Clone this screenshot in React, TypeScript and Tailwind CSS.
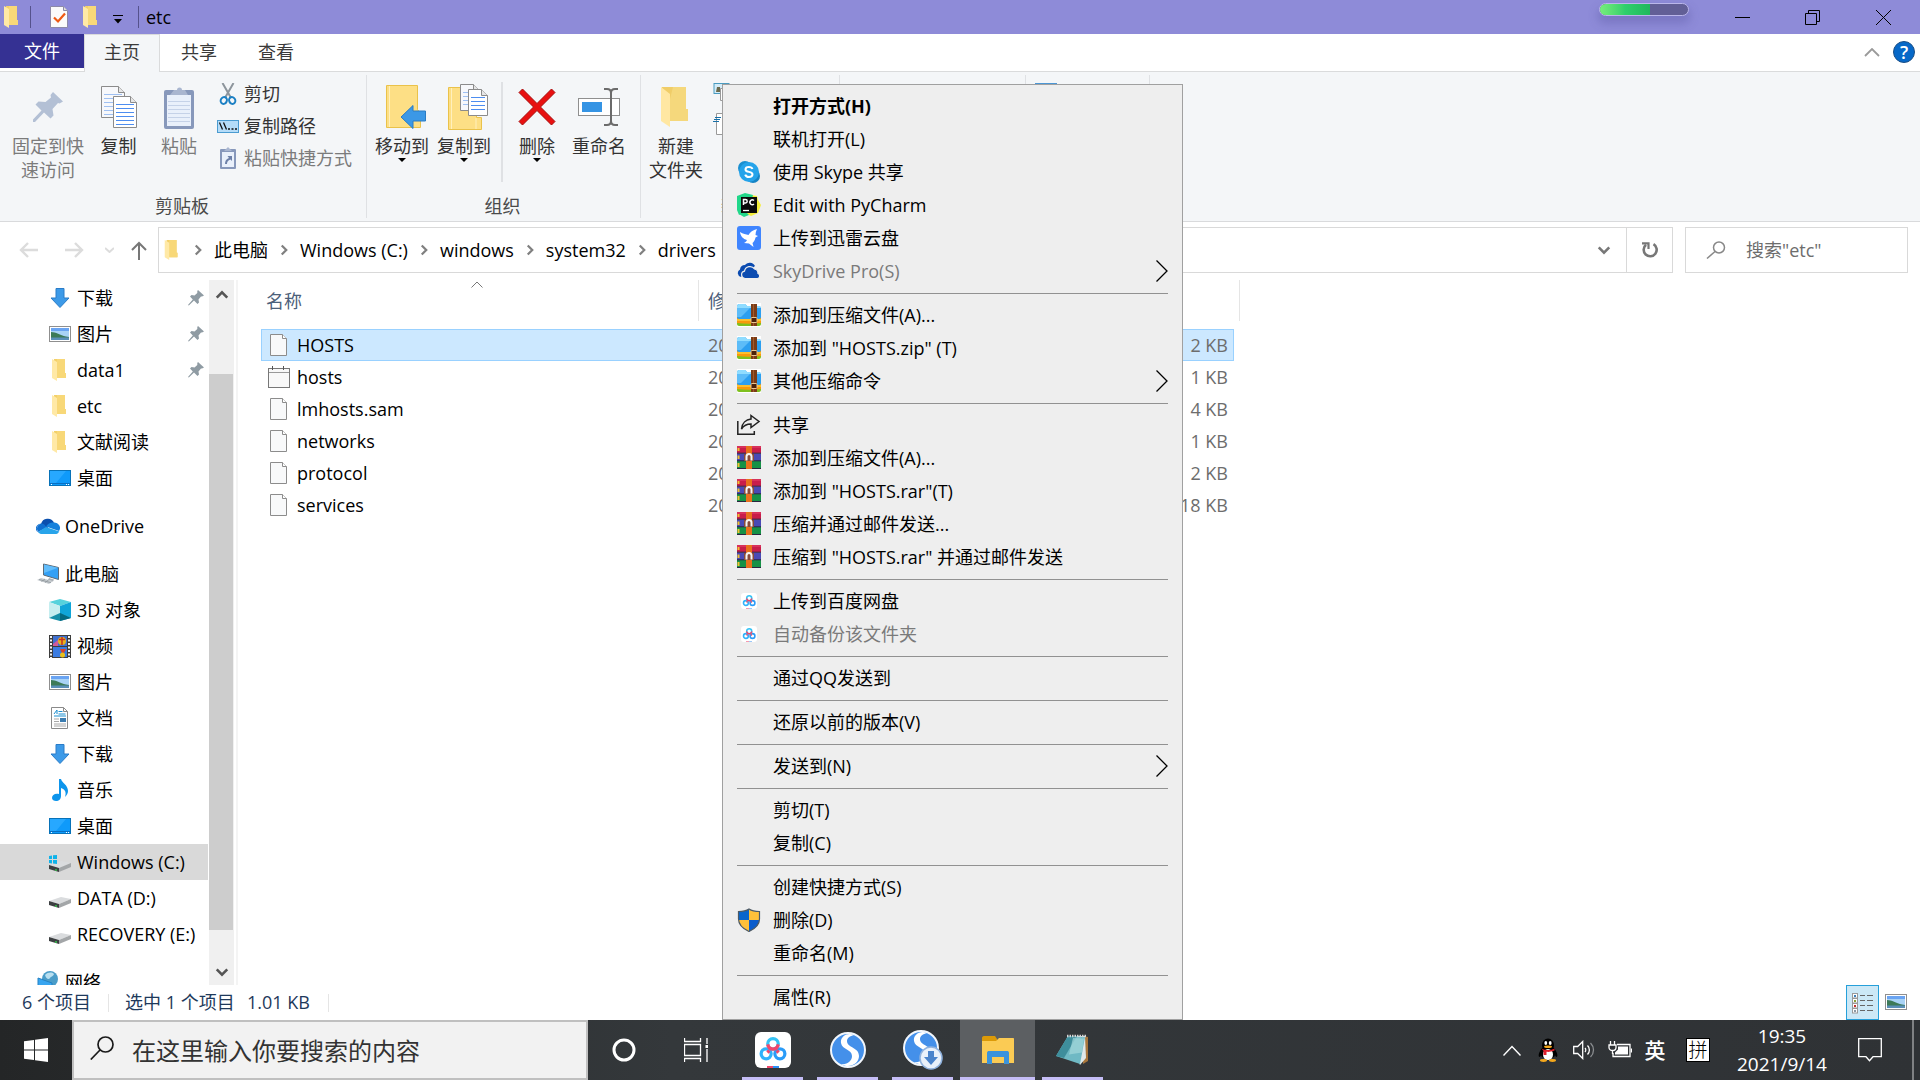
import React from "react";

type IconProps = { className?: string };

/* ---------- shared icons ---------- */

function Folder({ className = "w-[22px] h-[22px]" }: IconProps) {
  return (
    <svg viewBox="0 0 22 22" className={className} aria-hidden="true">
      <path d="M5 0h11v14h1v5H5z" fill="#f3d069" />
      <path d="M8 0h8v14h1v5H8z" fill="#f8d878" />
      <path d="M3 0l5 3v19l-5-3z" fill="#ffe9a6" />
    </svg>
  );
}

function DownArrow() {
  return (
    <svg viewBox="0 0 22 22" className="h-[22px] w-[22px]" aria-hidden="true">
      <path d="M7 1.500h8v9.500h5L11 20.500 2 11h5z" fill="#3c9ae8" stroke="#2a7cc8" strokeWidth="1" />
    </svg>
  );
}

function Picture() {
  return (
    <svg viewBox="0 0 22 16" className="h-4 w-[22px]" aria-hidden="true">
      <rect x=".5" y=".5" width="21" height="15" fill="#fff" stroke="#8f8f8f" />
      <rect x="2" y="2" width="18" height="12" fill="#a9d3f6" />
      <rect x="2" y="2" width="18" height="3" fill="#6aa4f2" />
      <path d="M2 6c5 0 9 3 15 4.500l3 .5v1H2z" fill="#3d7a58" />
      <path d="M2 11.500h18V14H2z" fill="#5a8fb8" />
    </svg>
  );
}

function Desktop() {
  return (
    <svg viewBox="0 0 22 16" className="h-4 w-[22px]" aria-hidden="true">
      <rect x=".5" y=".5" width="21" height="15" fill="#0f9afa" stroke="#0872b8" />
      <path d="M1 1h16L7 13H1z" fill="#27a8ff" />
      <path d="M1 13.500h20" stroke="#0a6fc0" />
      <path d="M2 14.500h1M17 14.500h1M19 14.500h1" stroke="#fff" />
    </svg>
  );
}

function OneDrive() {
  return (
    <svg viewBox="0 0 24 16" className="h-4 w-6" aria-hidden="true">
      <path d="M5 6a7 7 0 0 1 13-1.500L10 11z" fill="#0a4fae" />
      <path d="M5.500 5.500A5.300 5.300 0 0 0 2 14l9-4.500-3-3.200a6 6 0 0 0-2.500-.8z" fill="#0f6fd0" />
      <path d="M17.500 4.500a5.500 5.500 0 0 1 5.500 8.500L10 8.500c2-3 4.500-4.300 7.500-4z" fill="#1681dc" />
      <path d="M10 9l-8 5c1 1.400 2.300 2 4 2h13c2 0 3.500-1 4.300-2.600z" fill="#28a4ea" />
      <path d="M5.500 5.500A5.300 5.300 0 0 0 2 14l-1-.5a5 5 0 0 1 4.500-8z" fill="#0f6fd0" />
    </svg>
  );
}

function ThisPC() {
  return (
    <svg viewBox="0 0 24 22" className="h-[22px] w-6" aria-hidden="true">
      <path d="M7.500 1l15 3.500v12L7.500 12z" fill="#33a0f5" stroke="#5d6b77" />
      <path d="M8 1.500l14 3.200L8 10z" fill="#62bdfb" />
      <path d="M13 15l5 1.500-1 2-5-1.500z" fill="#a9b0b5" />
      <path d="M5 15l12 3-4 3L1 17z" fill="#c6cbcf" />
      <path d="M3 16.500l12 3.200M5.500 18.500L9 16M9 19.500l3.500-2.500" stroke="#8f979c" strokeWidth=".8" />
    </svg>
  );
}

function Cube() {
  return (
    <svg viewBox="0 0 22 22" className="h-[22px] w-[22px]" aria-hidden="true">
      <path d="M11 0l11 3-11 4L0 3z" fill="#56d2dc" />
      <path d="M0 3l11 4v8L0 19z" fill="#c5eef0" />
      <path d="M22 3L11 7v8l11 4z" fill="#10a5d8" />
      <path d="M11 14l11 5-11 3-11-3z" fill="#158fa8" />
      <path d="M11 14v8l11-3z" fill="#046a82" />
    </svg>
  );
}

function Film() {
  return (
    <svg viewBox="0 0 22 23" className="h-[23px] w-[22px]" aria-hidden="true">
      <rect width="22" height="23" fill="#3d3d3d" />
      <rect x="4" y="1" width="14" height="10" fill="#3f6fd0" />
      <rect x="4" y="12" width="14" height="10" fill="#3a7be0" />
      <circle cx="13" cy="6" r="4" fill="#e8b41c" />
      <path d="M13 2v8M10 4.500h6" stroke="#c8301e" strokeWidth="1.500" />
      <path d="M4 9l5-4v6H4z" fill="#d05a9a" />
      <path d="M11 14h6l-2 4h-2z" fill="#d8432a" />
      <circle cx="13.500" cy="20" r="2.500" fill="#e8c01c" />
      <path d="M2 1v22M20 1v22" stroke="#f4f4f4" strokeWidth="2" strokeDasharray="2 1.500" />
    </svg>
  );
}

function Document() {
  return (
    <svg viewBox="0 0 22 22" className="h-[22px] w-[22px]" aria-hidden="true">
      <path d="M2.500.5h12l4 4v17h-16z" fill="#fff" stroke="#8a8a8a" />
      <path d="M14.500.5v4h4" fill="none" stroke="#8a8a8a" />
      <path d="M5 7l3-4v4M9.500 4.500h4M9.500 7h7M5 9h12" stroke="#1d8fd0" fill="none" />
      <path d="M5 12h5M5 14.500h5M5 17h12M5 19h12" stroke="#a8a8a8" />
      <rect x="11" y="11" width="6" height="4" fill="#3b7cb0" />
    </svg>
  );
}

function Music() {
  return (
    <svg viewBox="0 0 22 22" className="h-[22px] w-[22px]" aria-hidden="true">
      <path d="M10 0h2c1 4 7 6 7 12 0 2-1 4-3 6 2-6-1-8-4-9v8c0 3-2 5-5 5-2 0-4-1-4-3 0-3 3-5 7-4z" fill="#0d95ec" />
    </svg>
  );
}

function Drive({ windows = false }: { windows?: boolean }) {
  return (
    <svg viewBox="0 0 22 22" className="h-[22px] w-[22px]" aria-hidden="true">
      <path d="M0 14l12-4 10 2-12 5z" fill="#dadcde" />
      <path d="M0 14l10 3v4L0 18z" fill="#3c3f41" />
      <path d="M10 17l12-5v4l-12 5z" fill="#a3a6a8" />
      <path d="M7 18v2" stroke="#36c24a" strokeWidth="1.500" />
      {windows && <path d="M0 5l3-.5V8H0zM4 4.300L8 4v4H4zM0 9h3v3.500L0 12zM4 9h4v4l-4-.4z" fill="#0fb3ea" />}
    </svg>
  );
}

function Network() {
  return (
    <svg viewBox="0 0 24 24" className="h-6 w-6" aria-hidden="true">
      <circle cx="14" cy="9" r="8" fill="#4a9cc8" />
      <path d="M9 5c3-3 7-3 9-1-1 3-3 2-4 4s-4 1-5-3z" fill="#b8dff0" />
      <path d="M2 8l14 5v10L2 19z" fill="#38a5f0" stroke="#2482c4" />
    </svg>
  );
}

function NavPin() {
  return (
    <svg viewBox="0 0 16 16" className="h-4 w-4" aria-hidden="true">
      <path d="M10 0l6 5.500-2 1-1 0-2.500 3 .5 3-1.500 1.500L6 10.500.800 15.500 0 15l4.800-5.500L2 6.500 3.500 5l3 .5L9.300 3V1z" fill="#8f9ba3" />
    </svg>
  );
}

function Chevron({ dir, className = "h-4 w-4" }: { dir: "left" | "right" | "up" | "down"; className?: string }) {
  const d = {
    right: "M5 2l6 6-6 6",
    left: "M11 2L5 8l6 6",
    up: "M2 11l6-6 6 6",
    down: "M2 5l6 6 6-6",
  }[dir];
  return (
    <svg viewBox="0 0 16 16" className={className} fill="none" stroke="currentColor" strokeWidth="3" aria-hidden="true">
      <path d={d} />
    </svg>
  );
}

/* ---------- title bar ---------- */

function TitleBar() {
  return (
    <header className="flex h-[34px] shrink-0 items-center bg-[#8e8bd8] text-black">
      <Folder className="ml-px h-[22px] w-[22px]" />
      <span className="ml-[7px] h-[22px] w-px bg-[#55528c]" />
      <button aria-label="属性" className="ml-[19px]">
        <svg viewBox="0 0 18 22" className="h-[22px] w-[18px]">
          <path d="M.5.5h13l4 4v17H.5z" fill="#fbfbfb" stroke="#8d8aa8" />
          <path d="M13.500.5v4h4" fill="#ddd" stroke="#8d8aa8" />
          <path d="M4 11.500l4 4 7-8" fill="none" stroke="#ee5a14" strokeWidth="2.200" />
        </svg>
      </button>
      <button aria-label="新建文件夹" className="ml-3">
        <Folder />
      </button>
      <button aria-label="自定义快速访问工具栏" className="ml-[11px]">
        <svg viewBox="0 0 10 9" className="mt-1 h-[9px] w-[10px]">
          <path d="M0 .5h10" stroke="#000" />
          <path d="M1 4h8L5 8.500z" fill="#000" />
        </svg>
      </button>
      <span className="ml-[15px] h-[22px] w-px bg-[#55528c]" />
      <span className="ml-[7px] leading-6">etc</span>
      <span className="mb-4 ml-auto h-[13px] w-[90px] overflow-hidden rounded-full border border-[#bab6ea] bg-[#625f96] shadow-[0_6px_8px_2px_rgba(90,85,160,0.35)]">
        <span className="block h-full w-[50px] bg-linear-to-r from-[#75ee7c] via-[#2fcf6c] to-[#20b85c]" />
      </span>
      <button aria-label="最小化" className="ml-[18px] flex h-full w-[70px] items-center justify-center">
        <svg viewBox="0 0 15 15" className="h-[15px] w-[15px]"><path d="M0 7.500h15" stroke="#000" /></svg>
      </button>
      <button aria-label="向下还原" className="flex h-full w-[70px] items-center justify-center">
        <svg viewBox="0 0 15 15" className="h-[15px] w-[15px]" fill="none" stroke="#000">
          <path d="M.5 3.500h11v11H.5zM3.500 3.500v-3h11v11h-3" />
        </svg>
      </button>
      <button aria-label="关闭" className="flex h-full w-[73px] items-center justify-center">
        <svg viewBox="0 0 15 15" className="h-[15px] w-[15px]" stroke="#000"><path d="M0 0l15 15M15 0L0 15" /></svg>
      </button>
    </header>
  );
}

/* ---------- ribbon ---------- */

function RibbonTabs() {
  return (
    <div className="flex h-[38px] shrink-0 border-b border-[#dadbdc] bg-white text-[#3a3a3a]">
      <button className="h-[34px] w-[84px] bg-[#353193] text-white">文件</button>
      <button className="-mb-px h-[38px] w-[76px] border-x border-t border-[#dadbdc] bg-[#f4f6f8] pb-[3px]">主页</button>
      <button className="h-[37px] w-[78px] pb-[2px]">共享</button>
      <button className="h-[37px] w-[76px] pb-[2px]">查看</button>
      <button aria-label="最小化功能区" className="mr-[13px] ml-auto text-[#9a9a9a]">
        <svg viewBox="0 0 16 9" className="h-[9px] w-4" fill="none" stroke="currentColor" strokeWidth="1.800"><path d="M1 8l7-7 7 7" /></svg>
      </button>
      <button aria-label="帮助" className="mt-[7px] mr-[5px] flex h-[22px] w-[22px] items-center justify-center rounded-full border border-[#1b4f86] bg-[#0668c8] leading-5 font-semibold text-white">
        ?
      </button>
    </div>
  );
}

function BigButton({ icon, lines, width, disabled, arrow }: { icon: React.ReactNode; lines: string[]; width: string; disabled?: boolean; arrow?: boolean }) {
  return (
    <button disabled={disabled} className={`flex shrink-0 flex-col items-center ${width} ${disabled ? "text-[#7b7b7b]" : "text-[#333]"}`}>
      <span className="flex h-[54px] items-center justify-center">{icon}</span>
      {lines.map((l) => (
        <span key={l} className="leading-6 whitespace-nowrap">{l}</span>
      ))}
      {arrow && <svg viewBox="0 0 8 4" className="h-1 w-2"><path d="M0 0h8L4 4z" fill="#000" /></svg>}
    </button>
  );
}

function RibbonGroup({ label, width, children }: { label: string; width: string; children?: React.ReactNode }) {
  return (
    <section className={`my-[3px] flex shrink-0 flex-col border-r border-[#dfe1e4] pt-[5px] ${width}`}>
      <div className="flex flex-1">{children}</div>
      <p className="pr-[2px] text-center leading-6 text-[#4a4a4a]">{label}</p>
    </section>
  );
}

function PinIcon() {
  return (
    <svg viewBox="0 0 30 30" className="h-[30px] w-[30px]" aria-hidden="true">
      <path d="M20 0l10 9.500-3.500 2-1.500-.5-5.500 6 1 6.500-3 3L11 20.500 2 30H0v-2.500l8.500-9L2.500 12.500l3-3 7 .5L18 5.500 17.500 3z" fill="#b3c0d5" />
    </svg>
  );
}

function Sheet({ x, y, w, h, soft }: { x: number; y: number; w: number; h: number; soft?: boolean }) {
  const ys: number[] = [];
  for (let i = y + 8; i < y + h - 3; i += 4) ys.push(i);
  return (
    <g>
      <path d={`M${x + 0.5} ${y + 0.5}h${w - 7}l6 6v${h - 7}h-${w - 1}z`} fill={soft ? "#f7f8fb" : "#fff"} stroke="#8b8b8b" />
      <path d={`M${x + w - 6.5} ${y + 0.5}v6h6`} fill="#e6e6e6" stroke="#8b8b8b" />
      {ys.map((v) => (
        <path key={v} d={`M${x + 3} ${v + 0.5}h${w - 6}`} stroke={soft ? "#9fc0f2" : "#4d8df0"} />
      ))}
    </g>
  );
}

function CopyIcon() {
  return (
    <svg viewBox="0 0 36 42" className="h-[42px] w-9" aria-hidden="true">
      <Sheet x={0} y={0} w={24} h={32} soft />
      <Sheet x={12} y={10} w={24} h={32} />
    </svg>
  );
}

function PasteIcon({ className = "h-[43px] w-[30px]" }: IconProps) {
  return (
    <svg viewBox="0 0 30 43" className={className} aria-hidden="true">
      <rect x="0" y="4" width="30" height="39" rx="2" fill="#8798bb" />
      <rect x="3" y="9" width="24" height="31" fill="#e9f0fb" />
      <path d="M4 15.500h22M4 19.500h22M4 23.500h22M4 27.500h22M4 31.500h22M4 35.500h22" stroke="#c5d2e8" />
      <path d="M6 9l4-5h3a2.500 2.500 0 0 1 5 0h3l3 5z" fill="#a9b6d0" />
    </svg>
  );
}

function MoveToIcon() {
  return (
    <svg viewBox="-8 0 48 44" className="h-11 w-12" aria-hidden="true">
      <path d="M.5.500h31v24l3 4v14H.5z" fill="#fddf85" stroke="#eac24a" />
      <path d="M3.500 1v41" stroke="#fff0bd" />
      <path d="M15 32l12-11.500V26h12.500v10H27v7.500z" fill="#3b98e6" stroke="#2a7cc4" />
    </svg>
  );
}

function CopyToIcon() {
  return (
    <svg viewBox="-8 0 48 46" className="h-[46px] w-12" aria-hidden="true">
      <path d="M.5 3.500h28v30h5v12H.5z" fill="#fddf85" stroke="#eac24a" />
      <path d="M3.500 4v41M28 34v11" stroke="#fff0bd" />
      <Sheet x={12} y={0} w={20} h={27} soft />
      <Sheet x={20} y={5} w={20} h={27} />
    </svg>
  );
}

function DeleteIcon() {
  return (
    <svg viewBox="0 0 38 38" className="h-[38px] w-[38px]" aria-hidden="true">
      <path d="M1 4.500l3.500-3.500L19 15.500 33.500 1 37 4.500 22.500 19 37 33.500 33.500 37 19 22.500 4.500 37 1 33.500 15.500 19z" fill="#e81010" stroke="#a80c0c" strokeWidth="1" />
    </svg>
  );
}

function RenameIcon() {
  return (
    <svg viewBox="0 0 42 38" className="h-[38px] w-[42px]" aria-hidden="true">
      <rect x=".5" y="10.500" width="41" height="17" fill="#fff" stroke="#8f8f8f" />
      <rect x="4" y="14" width="20" height="10" fill="#3594e4" />
      <path d="M26 1h3c3 0 4 2 4 4v28c0 2-1 4-4 4h-3M40 1h-3c-3 0-4 2-4 4M40 37h-3c-3 0-4-2-4-4" fill="none" stroke="#6b6b6b" strokeWidth="2" />
    </svg>
  );
}

function NewFolderIcon() {
  return (
    <svg viewBox="0 0 30 40" className="h-10 w-[30px]" aria-hidden="true">
      <path d="M1 0h24v22h2v12H1z" fill="#f0cd68" />
      <path d="M12 0h13v22h2v12H9V12z" fill="#f5d87c" />
      <path d="M0 0l9 7v33l-9-6z" fill="#ffe7a2" />
    </svg>
  );
}

function ScissorsIcon() {
  return (
    <svg viewBox="0 0 22 22" className="h-[22px] w-[22px]" fill="none" aria-hidden="true">
      <path d="M5.500 0l8 14M16.500 0l-8 14" stroke="#8d959c" strokeWidth="2" />
      <ellipse cx="7" cy="17.500" rx="3" ry="3.500" transform="rotate(25 7 17)" stroke="#1c80c4" strokeWidth="2" />
      <ellipse cx="15" cy="17.500" rx="3" ry="3.500" transform="rotate(-25 15 17)" stroke="#1c80c4" strokeWidth="2" />
    </svg>
  );
}

function PathIcon() {
  return (
    <svg viewBox="0 0 22 13" className="h-[13px] w-[22px]" aria-hidden="true">
      <rect x=".5" y=".5" width="21" height="12" fill="#b5dcf8" stroke="#4a9bd0" />
      <path d="M2.500 2.500l3 7M6.500 2.500l3 7" stroke="#111" strokeWidth="1.300" />
      <path d="M11 9h2M14.500 9h2M18 9h2" stroke="#111" strokeWidth="1.500" />
    </svg>
  );
}

function ShortcutIcon() {
  return (
    <svg viewBox="0 0 22 22" className="h-[22px] w-[22px]" aria-hidden="true">
      <rect x="3" y="2" width="16" height="20" rx="1" fill="#8798bb" />
      <rect x="5" y="5" width="12" height="15" fill="#e9f0fb" />
      <path d="M7 4l2-2 2-2 2 2 2 2z" fill="#a9b6d0" />
      <path d="M8 17c0-3 1-5 4-6l-1.500-2H15v5l-1.500-1.500C11 13 10 15 10 17z" fill="#6d80a8" />
    </svg>
  );
}

function SmallButton({ icon, label, disabled }: { icon: React.ReactNode; label: string; disabled?: boolean }) {
  return (
    <button disabled={disabled} className={`flex h-8 items-center gap-[5px] whitespace-nowrap ${disabled ? "text-[#7b7b7b]" : "text-[#333]"}`}>
      {icon}
      {label}
    </button>
  );
}

function Ribbon() {
  return (
    <div className="flex h-[150px] shrink-0 border-b border-[#d9dadc] bg-[#f4f6f8]">
      <RibbonGroup label="剪贴板" width="w-[367px]">
        <BigButton disabled width="w-24" icon={<PinIcon />} lines={["固定到快", "速访问"]} />
        <BigButton width="w-[45px]" icon={<CopyIcon />} lines={["复制"]} />
        <BigButton disabled width="w-[76px]" icon={<PasteIcon />} lines={["粘贴"]} />
        <div className="-mt-[2px] flex flex-col">
          <SmallButton icon={<ScissorsIcon />} label="剪切" />
          <SmallButton icon={<PathIcon />} label="复制路径" />
          <SmallButton disabled icon={<ShortcutIcon />} label="粘贴快捷方式" />
        </div>
      </RibbonGroup>
      <RibbonGroup label="组织" width="w-[274px]">
        <BigButton arrow width="w-[70px]" icon={<MoveToIcon />} lines={["移动到"]} />
        <BigButton arrow width="w-[54px]" icon={<CopyToIcon />} lines={["复制到"]} />
        <span className="mt-[2px] ml-[10px] h-[100px] w-[2px] bg-[#dfe1e4]" />
        <BigButton arrow width="w-[68px]" icon={<DeleteIcon />} lines={["删除"]} />
        <BigButton width="w-[56px]" icon={<RenameIcon />} lines={["重命名"]} />
      </RibbonGroup>
      <RibbonGroup label="新建" width="w-[199px]">
        <BigButton width="w-[70px]" icon={<NewFolderIcon />} lines={["新建", "文件夹"]} />
        <div className="flex flex-col gap-2">
          <svg viewBox="0 0 22 22" className="mt-[3px] ml-[2px] h-[22px] w-[22px]" aria-hidden="true">
            <rect x="1" y=".5" width="15" height="10" fill="#d4ecf8" stroke="#4a9bc0" />
            <path d="M4 4h3v5H3z" fill="#6b6a4e" />
            <path d="M7.500 5.500h12v12h-12z" fill="#fff" stroke="#999" />
          </svg>
          <svg viewBox="0 0 22 22" className="ml-[2px] h-[22px] w-[22px]" aria-hidden="true">
            <path d="M3.500.500h16v21h-16z" fill="#fff" stroke="#999" />
            <path d="M2 4.500h6M1 6.500h6M0 8.500h6" stroke="#1870a8" />
          </svg>
        </div>
      </RibbonGroup>
      <RibbonGroup label="打开" width="w-[186px]" />
      <RibbonGroup label="选择" width="w-[124px]">
        <span className="mt-[3px] ml-[9px] h-2 w-[22px] bg-[#4c96d4]" />
      </RibbonGroup>
    </div>
  );
}

/* ---------- address bar ---------- */

function AddressRow() {
  const crumbs = ["此电脑", "Windows (C:)", "windows", "system32", "drivers"];
  return (
    <div className="flex h-[58px] shrink-0 items-center bg-white pt-[5px] pr-3 pb-[7px]">
      <div className="flex w-[158px] shrink-0 items-center pl-[19px]">
        <button aria-label="后退" className="w-[46px] text-[#dcdcdc]">
          <svg viewBox="0 0 19 16" className="h-4 w-[19px]" fill="none" stroke="currentColor" strokeWidth="2.400"><path d="M19 8H2M9 1L2 8l7 7" /></svg>
        </button>
        <button aria-label="前进" className="w-10 text-[#dcdcdc]">
          <svg viewBox="0 0 19 16" className="h-4 w-[19px]" fill="none" stroke="currentColor" strokeWidth="2.400"><path d="M0 8h17M10 1l7 7-7 7" /></svg>
        </button>
        <button aria-label="最近浏览的位置" className="w-[26px] text-[#dcdcdc]">
          <svg viewBox="0 0 9 6" className="h-[6px] w-[9px]" fill="none" stroke="currentColor" strokeWidth="2"><path d="M0 1l4.500 4L9 1" /></svg>
        </button>
        <button aria-label="上移" className="text-[#777]">
          <svg viewBox="0 0 16 19" className="h-[19px] w-4" fill="none" stroke="currentColor" strokeWidth="2"><path d="M8 19V2M1 9l7-7 7 7" /></svg>
        </button>
      </div>
      <nav aria-label="地址" className="flex h-[46px] min-w-0 flex-1 items-center border border-[#d9d9d9] pl-[3px]">
        <Folder className="h-[22px] w-5" />
        {crumbs.map((c) => (
          <React.Fragment key={c}>
            <Chevron dir="right" className="mx-[10px] h-3 w-3 text-[#808080]" />
            <a href="#" className="whitespace-nowrap text-black">{c}</a>
          </React.Fragment>
        ))}
        <button aria-label="以前的位置" className="mr-[15px] ml-auto text-[#777]">
          <Chevron dir="down" className="h-[14px] w-[14px]" />
        </button>
        <button aria-label="刷新" className="flex h-full w-[46px] items-center justify-center border-l border-[#d9d9d9] text-[#777]">
          <svg viewBox="0 0 18 18" className="h-[18px] w-[18px]" fill="none" stroke="currentColor" strokeWidth="2.600">
            <path d="M12.500 3.200A6.500 6.500 0 1 1 5 3.800" />
            <path d="M1 2.300h6.500V8" strokeWidth="2.200" />
          </svg>
        </button>
      </nav>
      <label className="ml-3 flex h-[46px] w-[223px] items-center border border-[#d9d9d9] pl-5">
        <svg viewBox="0 0 20 18" className="h-[18px] w-5 shrink-0" fill="none" stroke="#888" strokeWidth="1.500">
          <circle cx="13" cy="6.500" r="5.500" />
          <path d="M9 10.500L1 17.500" />
        </svg>
        <input aria-label="搜索" placeholder='搜索"etc"' className="ml-5 w-full min-w-0 bg-transparent outline-none placeholder:text-[#6d6d6d]" />
      </label>
    </div>
  );
}

/* ---------- navigation pane ---------- */

type NavItem = { icon: React.ReactNode; label: string; pinned?: boolean; root?: boolean; selected?: boolean };

const navItems: NavItem[] = [
  { icon: <DownArrow />, label: "下载", pinned: true },
  { icon: <Picture />, label: "图片", pinned: true },
  { icon: <Folder />, label: "data1", pinned: true },
  { icon: <Folder />, label: "etc" },
  { icon: <Folder />, label: "文献阅读" },
  { icon: <Desktop />, label: "桌面" },
  { icon: <OneDrive />, label: "OneDrive", root: true },
  { icon: <ThisPC />, label: "此电脑", root: true },
  { icon: <Cube />, label: "3D 对象" },
  { icon: <Film />, label: "视频" },
  { icon: <Picture />, label: "图片" },
  { icon: <Document />, label: "文档" },
  { icon: <DownArrow />, label: "下载" },
  { icon: <Music />, label: "音乐" },
  { icon: <Desktop />, label: "桌面" },
  { icon: <Drive windows />, label: "Windows (C:)", selected: true },
  { icon: <Drive />, label: "DATA (D:)" },
  { icon: <Drive />, label: "RECOVERY (E:)" },
  { icon: <Network />, label: "网络", root: true },
];

function NavPane() {
  return (
    <aside className="flex w-[238px] shrink-0 border-r-2 border-[#f4f4f4]">
      <ul className="h-0 min-h-full w-[208px] overflow-hidden">
        {navItems.map((n, i) => (
          <li key={i} className={n.root ? "mt-3" : ""}>
            <a href="#" className={`flex h-9 items-center text-black ${n.root ? "pl-9" : "pl-12"} ${n.selected ? "bg-[#d9d9d9]" : ""}`}>
              <span className="mr-[5px] flex w-6 shrink-0 justify-center">{n.icon}</span>
              <span className="whitespace-nowrap">{n.label}</span>
              {n.pinned && <span className="mr-1 ml-auto"><NavPin /></span>}
            </a>
          </li>
        ))}
      </ul>
      <div className="ml-px flex w-[25px] flex-col items-center bg-[#f0f0f0] text-[#555]">
        <button aria-label="向上滚动" className="flex h-[30px] items-center"><Chevron dir="up" className="h-[14px] w-[14px]" /></button>
        <div className="mt-16 mr-px w-6 flex-1 bg-[#cdcdcd]" />
        <button aria-label="向下滚动" className="mt-[29px] flex h-[26px] items-center"><Chevron dir="down" className="h-[14px] w-[14px]" /></button>
      </div>
    </aside>
  );
}

/* ---------- file list ---------- */

const files = [
  { name: "HOSTS", size: "2 KB", selected: true },
  { name: "hosts", size: "1 KB", calendar: true },
  { name: "lmhosts.sam", size: "4 KB" },
  { name: "networks", size: "1 KB" },
  { name: "protocol", size: "2 KB" },
  { name: "services", size: "18 KB" },
];

function FileIcon() {
  return (
    <svg viewBox="0 0 22 22" className="h-[22px] w-[22px]" aria-hidden="true">
      <path d="M2.500.5h12l4 4v17h-16z" fill="#f8f9fa" stroke="#8c8c8c" />
      <path d="M14.500.5v4h4" fill="#fff" stroke="#8c8c8c" />
    </svg>
  );
}

function CalendarIcon() {
  return (
    <svg viewBox="0 0 22 22" className="h-[22px] w-[22px]" aria-hidden="true">
      <rect x=".5" y="2.500" width="21" height="19" fill="#f8f8f8" stroke="#777" />
      <path d="M1 6.500h20" stroke="#999" />
      <path d="M4.500 0v4M15.500 0v4" stroke="#555" />
    </svg>
  );
}

function FileList() {
  return (
    <main className="min-w-0 flex-1 overflow-hidden pl-[23px]">
      <table className="w-[979px] table-fixed border-separate border-spacing-0">
        <thead>
          <tr className="text-left text-[#4c607a]">
            <th className="w-[438px] p-0 font-normal">
              <div className="relative mb-2 flex h-[41px] items-center border-r border-[#e5e5e5] pl-[5px]">
                名称
                <svg viewBox="0 0 12 7" className="absolute top-px left-[210px] h-[7px] w-3" fill="none" stroke="#777" aria-hidden="true"><path d="M.5 6.500L6 1l5.500 5.500" /></svg>
              </div>
            </th>
            <th className="p-0 font-normal"><div className="mb-2 flex h-[41px] items-center pl-[9px]">修改日期</div></th>
            <th className="w-[120px] p-0"><div className="mb-2 h-[41px]" /></th>
            <th className="w-[6px] p-0"><div className="mb-2 h-[41px] border-r border-[#e5e5e5]" /></th>
          </tr>
        </thead>
        <tbody>
          {files.map((f) => (
            <tr key={f.name} className="text-[#6d6d6d]">
              <td className={`h-8 p-0 text-black ${f.selected ? "border-y border-l border-[#99d1ff] bg-[#cce8ff]" : "border-y border-l border-transparent"}`}>
                <span className="flex items-center gap-[7px] pl-[6px]">
                  {f.calendar ? <CalendarIcon /> : <FileIcon />}
                  {f.name}
                </span>
              </td>
              <td className={`h-8 border-y p-0 pl-[9px] ${f.selected ? "border-[#99d1ff] bg-[#cce8ff]" : "border-transparent"}`}>20</td>
              <td className={`h-8 border-y border-r p-0 pr-[5px] text-right ${f.selected ? "border-[#99d1ff] bg-[#cce8ff]" : "border-transparent"}`}>{f.size}</td>
              <td className="p-0" />
            </tr>
          ))}
        </tbody>
      </table>
    </main>
  );
}

/* ---------- status bar ---------- */

function StatusBar() {
  return (
    <footer className="flex h-[35px] shrink-0 items-center bg-white pr-[13px] text-[#1e395b]">
      <span className="ml-[22px] w-[86px] pb-[2px] whitespace-nowrap">6 个项目</span>
      <span className="h-[18px] w-px bg-[#e5e5e5]" />
      <span className="ml-4 w-[122px] pb-[2px] whitespace-nowrap">选中 1 个项目</span>
      <span className="w-[81px] pb-[2px] whitespace-nowrap">1.01 KB</span>
      <span className="h-[18px] w-px bg-[#e5e5e5]" />
      <button aria-label="详细信息" className="ml-auto flex h-[35px] w-[33px] items-center justify-center border border-[#26a0da] bg-[#cce8f6]">
        <svg viewBox="0 0 22 22" className="h-[22px] w-[22px]">
          {[1, 6, 11, 16].map((y, i) => (
            <g key={y}>
              <rect x=".5" y={y + 0.5} width="5" height="4.500" fill="#fff" stroke="#999" />
              <rect x="2" y={y + 2} width="2" height="2" fill={["#3b7fb8", "#8aa03a", "#c03030", "#8a9aa5"][i]} />
              <path d={`M8 ${y + 2.5}h5M15 ${y + 2.5}h6`} stroke="#666" />
            </g>
          ))}
        </svg>
      </button>
      <button aria-label="大图标" className="mb-[2px] ml-[6px]"><Picture /></button>
    </footer>
  );
}

/* ---------- context menu icons ---------- */

function SkypeIcon() {
  return (
    <svg viewBox="0 0 24 24" className="h-6 w-6" aria-hidden="true">
      <circle cx="8" cy="8" r="7" fill="#1a8fd0" />
      <circle cx="16" cy="16" r="7" fill="#1583c4" />
      <circle cx="12" cy="12" r="10" fill="#25a3ea" />
      <path d="M15.500 9c-.6-1.500-2-2-3.600-2-2 0-3.400.9-3.400 2.400 0 3.400 7 1.600 7 4.900 0 1.700-1.500 2.700-3.500 2.700-2 0-3.300-.8-3.800-2.400" fill="none" stroke="#fff" strokeWidth="2" />
    </svg>
  );
}

function PyCharmIcon() {
  return (
    <svg viewBox="0 0 24 24" className="h-6 w-6" aria-hidden="true">
      <path d="M14 2l6 1 1 4 3 5-3 8-7 3-6-3z" fill="#f5ee3c" />
      <path d="M0 3l8-3 8 2-4 14-10 6-2-5z" fill="#21d789" />
      <path d="M2 21l6-3 4 4-5 2z" fill="#21d789" />
      <rect x="4" y="4" width="16" height="16" fill="#0b0b0b" />
      <path d="M6.500 12V6.500h2a1.700 1.700 0 0 1 0 3.400H7M17 7.500a2.400 2.400 0 1 0 0 3.500" fill="none" stroke="#fff" strokeWidth="1.500" />
      <path d="M6 17.500h6" stroke="#fff" strokeWidth="1.300" />
    </svg>
  );
}

function ThunderIcon() {
  return (
    <svg viewBox="0 0 24 24" className="h-6 w-6" aria-hidden="true">
      <rect width="24" height="24" rx="3" fill="#3f85ff" />
      <path d="M3 6c3 2 6 2.500 8.500 3C13 6 16 4 20 3c-1 2-1.500 4-1.500 6l2.500 1-2.500 1.500c-.5 3-2 4.500-3 5.500l1 4-4.500-3.500-5-.5c2-1 2.500-2 3-3C6 13 3.500 10 3 6z" fill="#fff" />
    </svg>
  );
}

function SkyDriveIcon() {
  return (
    <svg viewBox="0 0 24 24" className="h-6 w-6" aria-hidden="true">
      <path d="M4 18a4 4 0 0 1-1-7.500A5 5 0 0 1 8 6a6 6 0 0 1 10 1" fill="#0b4bb0" />
      <path d="M8 19.500a3.700 3.700 0 0 1-.5-7.300A5.500 5.500 0 0 1 17.500 10a4.500 4.500 0 0 1 3.500 4.500 2.600 2.600 0 0 1-.5 5z" fill="#0b4bb0" stroke="#eee" strokeWidth="1.200" />
    </svg>
  );
}

function ZipIcon() {
  return (
    <svg viewBox="0 0 24 24" className="h-6 w-6" aria-hidden="true">
      <rect width="24" height="24" fill="#fff" />
      <path d="M0 17h24v4c0 1-1 2-2 2H2c-1 0-2-1-2-2z" fill="#7fc01f" />
      <path d="M0 14h24v6c-8 1-16 1-24 0z" fill="#f79a0c" />
      <path d="M0 16h24v2H0z" fill="#fdbf2d" />
      <path d="M2 1h6l2 2h12c1 0 2 1 2 2v9c0 1-1 2-2 2H2c-1 0-2-1-2-2V3c0-1 1-2 2-2z" fill="#2c9ff0" />
      <path d="M2 1h6l2 2h12c1 0 2 1 2 2H0V3c0-1 1-2 2-2z" fill="#8fdcff" />
      <path d="M0 5h13L4 14H0z" fill="#5cbcf8" />
      <rect x="14" y="1" width="6" height="22" fill="#7a3c17" />
      <path d="M16.500 1v22" stroke="#a3592a" />
      <rect x="14" y="14.500" width="6" height="5" rx="1" fill="#4c2109" stroke="#e8c690" strokeWidth="1" />
    </svg>
  );
}

function ShareIcon() {
  return (
    <svg viewBox="0 0 24 24" className="h-6 w-6" fill="none" stroke="#222" strokeWidth="1.500" aria-hidden="true">
      <path d="M.8 8v13.200h16.500V18" />
      <path d="M14 2.500l8 6-8 6v-3.500c-4 0-7 1-9.500 5C5 10 9 6.500 14 6z" />
    </svg>
  );
}

function RarIcon() {
  return (
    <svg viewBox="0 0 24 24" className="h-6 w-6" aria-hidden="true">
      <rect width="24" height="7.500" fill="#c81d4a" />
      <rect y="7.500" width="24" height="7.500" fill="#4a4ab5" />
      <rect y="15" width="24" height="8" fill="#179146" />
      <path d="M0 1h24" stroke="#e8476c" />
      <path d="M0 7.200h24M0 14.800h24M0 22.500h24" stroke="#2b2440" />
      <path d="M1.500 2v3M1.500 9.500v3.500M1.500 17v4" stroke="#f2c230" strokeWidth="2" />
      <rect x="9" width="6" height="23" fill="#e8701c" />
      <rect x="7" y="8" width="10" height="7" fill="#8a4a38" />
      <path d="M9.500 14.500v-4a2.500 2.500 0 0 1 5 0v4" fill="none" stroke="#f5f5f5" strokeWidth="2" />
    </svg>
  );
}

function BaiduMark() {
  return (
    <g fill="none">
      <circle cx="6.500" cy="15" r="4" stroke="#2fb2fb" strokeWidth="2.600" />
      <circle cx="17.500" cy="15" r="4" stroke="#2b9cf8" strokeWidth="2.600" />
      <circle cx="12" cy="7" r="4.200" stroke="#35c3f5" strokeWidth="2.600" />
      <path d="M7.800 7.500c.8 5 7.600 5 8.400 0M9 12.500l-1.500 1.500M15 12.500l1.500 1.500" stroke="#f0476c" strokeWidth="2.600" />
    </g>
  );
}

function BaiduSmall() {
  return (
    <svg viewBox="0 0 24 24" className="h-6 w-6" aria-hidden="true">
      <rect x="4" y="4" width="16" height="16" rx="3" fill="#fff" />
      <g transform="translate(5 5) scale(.6)"><BaiduMark /></g>
      <path d="M9 19.500h3" stroke="#f59ab0" />
      <path d="M12 19.500h3" stroke="#9cc8f8" />
    </svg>
  );
}

function ShieldIcon() {
  return (
    <svg viewBox="0 0 24 24" className="h-6 w-6" aria-hidden="true">
      <path d="M12 1c3 2 6 2.500 10.500 2.500V11c0 6-5 10-10.500 12.500V12H1.500V3.500C6 3.500 9 3 12 1z" fill="#ffc03a" />
      <path d="M12 1v11H1.500V3.500C6 3.500 9 3 12 1z" fill="#0a66cc" />
      <path d="M12 12h10.400c-.6 5.500-5.400 9-10.400 11.500z" fill="#0a5ccc" />
      <path d="M1.600 12H12v11.500C7 21 2.200 17.500 1.600 12z" fill="#ffc03a" />
      <path d="M12 1c3 2 6 2.500 10.500 2.500V11c0 6-5 10-10.500 12.500C6.500 21 1.500 17 1.500 11V3.500C6 3.500 9 3 12 1z" fill="none" stroke="#4d5a66" strokeWidth="1.200" />
    </svg>
  );
}

type MenuEntry = { label: string; icon?: React.ReactNode; sub?: boolean; disabled?: boolean; bold?: boolean };

const menuGroups: MenuEntry[][] = [
  [
    { label: "打开方式(H)", bold: true },
    { label: "联机打开(L)" },
    { label: "使用 Skype 共享", icon: <SkypeIcon /> },
    { label: "Edit with PyCharm", icon: <PyCharmIcon /> },
    { label: "上传到迅雷云盘", icon: <ThunderIcon /> },
    { label: "SkyDrive Pro(S)", icon: <SkyDriveIcon />, sub: true, disabled: true },
  ],
  [
    { label: "添加到压缩文件(A)...", icon: <ZipIcon /> },
    { label: '添加到 "HOSTS.zip" (T)', icon: <ZipIcon /> },
    { label: "其他压缩命令", icon: <ZipIcon />, sub: true },
  ],
  [
    { label: "共享", icon: <ShareIcon /> },
    { label: "添加到压缩文件(A)...", icon: <RarIcon /> },
    { label: '添加到 "HOSTS.rar"(T)', icon: <RarIcon /> },
    { label: "压缩并通过邮件发送...", icon: <RarIcon /> },
    { label: '压缩到 "HOSTS.rar" 并通过邮件发送', icon: <RarIcon /> },
  ],
  [
    { label: "上传到百度网盘", icon: <BaiduSmall /> },
    { label: "自动备份该文件夹", icon: <BaiduSmall />, disabled: true },
  ],
  [{ label: "通过QQ发送到" }],
  [{ label: "还原以前的版本(V)" }],
  [{ label: "发送到(N)", sub: true }],
  [{ label: "剪切(T)" }, { label: "复制(C)" }],
  [{ label: "创建快捷方式(S)" }, { label: "删除(D)", icon: <ShieldIcon /> }, { label: "重命名(M)" }],
  [{ label: "属性(R)" }],
];

function ContextMenu() {
  return (
    <div role="menu" className="absolute top-[84px] left-[722px] z-10 w-[461px] border border-[#a0a0a0] bg-[#eeeeee] pt-1 pr-[14px] pb-[6px] pl-[14px]">
      {menuGroups.map((g, gi) => (
        <div key={gi} className={gi > 0 ? "mt-[6px] border-t border-[#919191] pt-1" : ""}>
          {g.map((m) => (
            <button
              key={m.label}
              role="menuitem"
              disabled={m.disabled}
              className={`flex h-[33px] w-full items-center gap-3 text-left ${m.disabled ? "text-[#7a7a7a]" : "text-black"} ${m.bold ? "font-bold" : ""}`}
            >
              <span className="h-6 w-6 shrink-0">{m.icon}</span>
              <span className="whitespace-nowrap">{m.label}</span>
              {m.sub && (
                <svg viewBox="0 0 12 22" className="ml-auto h-[22px] w-3" fill="none" stroke="#000" strokeWidth="1.300" aria-hidden="true"><path d="M.5.500L11 11 .5 21.500" /></svg>
              )}
            </button>
          ))}
        </div>
      ))}
    </div>
  );
}

/* ---------- taskbar ---------- */

function Sogou() {
  return (
    <g>
      <circle cx="18" cy="18" r="17" fill="#4490ea" stroke="#f2f6fb" strokeWidth="2" />
      <path d="M24 3c-7-3-14 2-13 8 1 7 11 6 11 13 0 5-5 9-11 8 8 5 18 0 18-8 0-9-12-8-12-15 0-3 3-5 7-6z" fill="#fff" />
    </g>
  );
}

function TaskApp({ label, active, children }: { label: string; active?: boolean; children: React.ReactNode }) {
  return (
    <button aria-label={label} className={`flex h-full w-[75px] flex-col items-center ${active ? "bg-[#5c5f62]" : ""}`}>
      <span className="flex h-[57px] items-center pt-[3px]">{children}</span>
      <span className={`h-[3px] bg-[#c5bdf6] ${active ? "w-full" : "w-[61px]"}`} />
    </button>
  );
}

function Taskbar() {
  return (
    <div className="flex h-[60px] shrink-0 bg-linear-to-r from-[#242627] via-[#34383b] via-35% to-[#2f3235] text-white">
      <button aria-label="开始" className="flex w-[72px] items-center justify-center">
        <svg viewBox="0 0 24 24" className="h-6 w-6" fill="#fff"><path d="M0 3.300l10-1.400v9.600H0zM11 1.700L24 0v11.500H11zM0 12.500h10v9.600L0 20.700zM11 12.500h13V24l-13-1.700z" /></svg>
      </button>
      <label className="flex w-[516px] shrink-0 items-center border-2 border-[#c0c0c0] bg-[#f2f2f2] pl-4">
        <svg viewBox="0 0 24 24" className="mb-1 h-6 w-6 shrink-0" fill="none" stroke="#1a1a1a" strokeWidth="1.700">
          <circle cx="15.500" cy="8.500" r="7.500" />
          <path d="M10 14L.8 23.500" />
        </svg>
        <input aria-label="任务栏搜索" placeholder="在这里输入你要搜索的内容" className="ml-[18px] w-full min-w-0 bg-transparent pt-[2px] text-2xl outline-none placeholder:text-[#333]" />
      </label>
      <button aria-label="Cortana" className="flex w-[72px] items-center justify-center">
        <svg viewBox="0 0 24 24" className="h-6 w-6" fill="none" stroke="#fff" strokeWidth="3"><circle cx="12" cy="12" r="10" /></svg>
      </button>
      <button aria-label="任务视图" className="flex w-[75px] items-center justify-center pr-[3px]">
        <svg viewBox="0 0 24 24" className="h-6 w-6" fill="none" stroke="#fff" strokeWidth="1.300">
          <path d="M.5 0v3.500h16V0M.5 6.500h16v11H.5zM.5 24v-3.500h16V24M23 0v6M23 11v13" />
          <path d="M21.500 7h3v3h-3z" fill="#fff" stroke="none" />
        </svg>
      </button>
      <TaskApp label="百度网盘">
        <svg viewBox="0 0 36 36" className="h-9 w-9">
          <rect width="36" height="36" rx="6" fill="#fff" />
          <g transform="translate(3 3) scale(1.250)"><BaiduMark /></g>
          <path d="M12 35h6" stroke="#f0476c" strokeWidth="2" />
          <path d="M18 35h6" stroke="#2b8ff8" strokeWidth="2" />
        </svg>
      </TaskApp>
      <TaskApp label="搜狗浏览器"><svg viewBox="0 0 36 36" className="h-9 w-9"><Sogou /></svg></TaskApp>
      <TaskApp label="搜狗下载">
        <svg viewBox="0 0 40 40" className="h-10 w-10">
          <Sogou />
          <circle cx="28" cy="28" r="11" fill="#e9f1fb" stroke="#8fb2de" strokeWidth="1.500" />
          <path d="M25 21h6v6h4l-7 8-7-8h4z" fill="#4a84cc" />
        </svg>
      </TaskApp>
      <TaskApp label="文件资源管理器" active>
        <svg viewBox="0 0 32 28" className="h-7 w-8">
          <path d="M0 2c0-1 .5-2 2-2h11l2 3v3H0z" fill="#dc9a08" />
          <path d="M0 5h14l3-3h14c.6 0 1 .4 1 1v24H0z" fill="#fbcb54" />
          <path d="M5 28V17c0-1.500 1-2 2-2h18c1 0 2 .5 2 2v11h-5v-7H10v7z" fill="#3b93dc" />
        </svg>
      </TaskApp>
      <TaskApp label="记事本">
        <svg viewBox="0 0 34 32" className="h-8 w-[34px]">
          <path d="M27 2l5 1v24l-5 3z" fill="#a8763c" />
          <path d="M12 2h17l1 22-6 7z" fill="#dfe9ea" />
          <path d="M12 2l17 1-5 27L0 22z" fill="#6fb9c4" />
          <path d="M12 2h9L8 24l-8-2z" fill="#3e8e9c" />
          <path d="M17 4l11 .5-2 14-13 2z" fill="#a4d8dc" opacity=".7" />
          <path d="M11 2h19" stroke="#d4d4d4" strokeWidth="2.500" strokeDasharray="1.500 1" />
        </svg>
      </TaskApp>
      <div className="ml-auto flex items-center">
        <button aria-label="显示隐藏的图标" className="w-[18px]">
          <svg viewBox="0 0 18 11" className="h-[11px] w-[18px]" fill="none" stroke="#fff" strokeWidth="1.400"><path d="M.5 10.500L9 1.500l8.500 9" /></svg>
        </button>
        <svg viewBox="0 0 20 24" className="ml-[17px] h-6 w-5" aria-label="QQ">
          <ellipse cx="10" cy="7.500" rx="6" ry="7" fill="#000" />
          <path d="M4 10c-3 4-4 7-3 9 1 0 2-1 2-2 1 5 13 5 14 0 0 1 1 2 2 2 1-2 0-5-3-9z" fill="#000" />
          <ellipse cx="10" cy="16.500" rx="5" ry="5.500" fill="#fff" />
          <ellipse cx="7.800" cy="5" rx="1.400" ry="2" fill="#fff" />
          <ellipse cx="12.200" cy="5" rx="1.400" ry="2" fill="#fff" />
          <ellipse cx="10" cy="8.800" rx="4" ry="1.300" fill="#f5a81c" />
          <path d="M3.500 10.500c4 2 9 2 13 0v2c-4 1.500-6 1.500-8 1.300V17H5.500v-4z" fill="#e0202c" />
          <ellipse cx="5.500" cy="22.500" rx="3.500" ry="1.400" fill="#f5a81c" />
          <ellipse cx="14.500" cy="22.500" rx="3.500" ry="1.400" fill="#f5a81c" />
        </svg>
        <button aria-label="音量" className="ml-[15px]">
          <svg viewBox="0 0 22 20" className="h-5 w-[22px]" fill="none" stroke="#fff" strokeWidth="1.300">
            <path d="M.7 6.500h4l5-5v17l-5-5h-4z" />
            <path d="M12 8c1 1 1 3 0 4M14.500 5.500c2.500 2.500 2.500 6.500 0 9" />
            <path d="M17.500 3c4 4 4 10 0 14" stroke="#8a8d90" />
          </svg>
        </button>
        <button aria-label="电池" className="ml-[13px]">
          <svg viewBox="0 0 24 18" className="h-[18px] w-6" fill="none" stroke="#fff" strokeWidth="1.300">
            <path d="M9 3.500h13v12H5V12" />
            <path d="M10 5.500h10v8H7v-2l3-3z" fill="#fff" stroke="none" />
            <path d="M1 4h7v2.500c0 4-7 4-7 0zM2.500 4V0M6.500 4V0M4.500 9.500V13" />
            <path d="M23.500 7.500v4" />
          </svg>
        </button>
        <button className="ml-3 w-[22px] text-[21px] leading-6 font-medium">英</button>
        <button className="ml-5 flex h-6 w-6 items-center justify-center border border-black bg-white text-[19px] leading-[22px] font-light text-black">拼</button>
        <button className="ml-[18px] w-[108px] text-center text-[19px] leading-7">
          <span className="block">19:35</span>
          <span className="block">2021/9/14</span>
        </button>
        <button aria-label="通知" className="ml-[22px]">
          <svg viewBox="0 0 24 24" className="h-6 w-6" fill="none" stroke="#fff" strokeWidth="1.300"><path d="M.7.700h22.600v18H15l-3.500 4-3.500-4H.7z" /></svg>
        </button>
      </div>
      <button aria-label="显示桌面" className="ml-[30px] w-2 border-l-2 border-[#7f8183]" />
    </div>
  );
}

export default function App() {
  return (
    <div className="relative flex h-screen flex-col overflow-hidden bg-white font-['Open_Sans','Noto_Sans_CJK_SC',sans-serif] text-[18px] leading-6">
      <TitleBar />
      <RibbonTabs />
      <Ribbon />
      <AddressRow />
      <div className="flex min-h-0 flex-1">
        <NavPane />
        <FileList />
      </div>
      <StatusBar />
      <Taskbar />
      <ContextMenu />
    </div>
  );
}
